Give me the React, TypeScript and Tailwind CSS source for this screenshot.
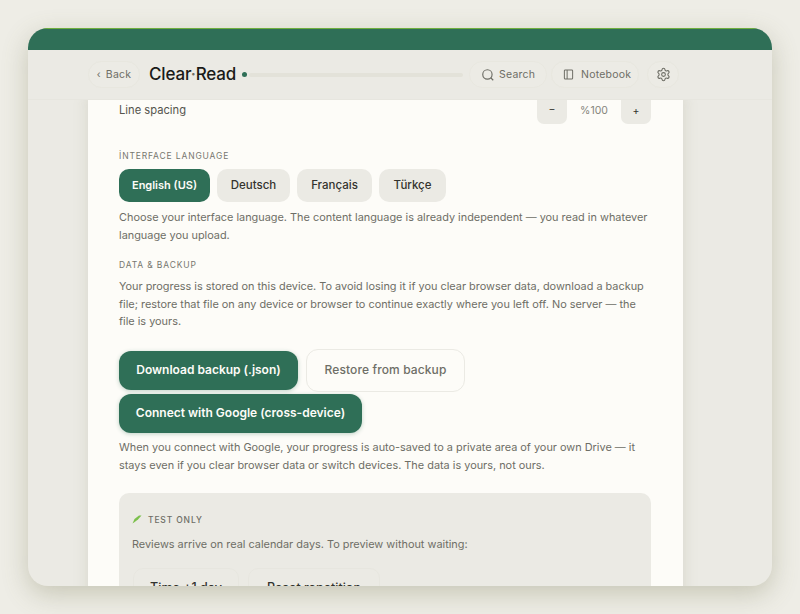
import React from "react";

function Pill({ children, className = "" }: { children: React.ReactNode; className?: string }) {
  return (
    <div className={"flex h-[27px] items-center rounded-[14px] border border-[#e8e7df] bg-[#ecebe5] text-[10.5px] tracking-[0.02em] text-[#6e6e66] " + className}>
      {children}
    </div>
  );
}

export default function App() {
  return (
    <div className="h-[614px] w-[800px] overflow-hidden bg-[#eeede6] px-[28px] pt-[28px] font-['Inter','Liberation_Sans',sans-serif]">
      <div className="flex h-[558px] w-[744px] flex-col overflow-hidden rounded-[20px] bg-[#ebeae4] shadow-[0_8px_26px_rgba(110,110,70,0.3)]">
        <div className="h-[22px] shrink-0 border-t border-[#6fae3e] bg-[#2f6f57]" />
        <div className="relative z-10 flex h-[50px] shrink-0 items-center border-b border-[#e7e6df] bg-[#ebeae4] pl-[60px]">
          <Pill className="w-[52px] justify-center gap-[5px]">
            <span className="text-[10px]">‹</span>
            <span>Back</span>
          </Pill>
          <div className="ml-[9px] text-[17px] font-medium leading-none tracking-[-0.01em] text-[#1a1a18]">
            Clear<span className="text-[#6e6e66]">·</span>Read
          </div>
          <div className="ml-[6px] h-[5px] w-[5px] rounded-full bg-[#2f6f57]" />
          <div className="ml-[2px] h-[4px] w-[214px] rounded-full bg-[#e3e2d9]" />
          <Pill className="ml-[6px] w-[78px] gap-[4px] pl-[11px]">
            <svg width="14" height="14" viewBox="0 0 24 24" fill="none" stroke="currentColor" strokeWidth="2"><circle cx="11" cy="11" r="8" /><path d="m21 21-4.3-4.3" /></svg>
            <span>Search</span>
          </Pill>
          <Pill className="ml-[4px] w-[88px] gap-[7px] pl-[11px]">
            <svg width="11" height="11" viewBox="0 0 12 12" fill="none" stroke="currentColor" strokeWidth="1.1"><rect x="1.5" y="1" width="9" height="10" rx="1" /><path d="M4.5 1v10" /></svg>
            <span>Notebook</span>
          </Pill>
          <Pill className="ml-[8px] w-[32px] justify-center">
            <svg width="15" height="15" viewBox="0 0 24 24" fill="none" stroke="currentColor" strokeWidth="1.7" strokeLinecap="round" strokeLinejoin="round"><path d="M9.671 4.136a2.34 2.34 0 0 1 4.659 0 2.34 2.34 0 0 0 3.319 1.915 2.34 2.34 0 0 1 2.33 4.033 2.34 2.34 0 0 0 0 3.831 2.34 2.34 0 0 1-2.33 4.033 2.34 2.34 0 0 0-3.319 1.915 2.34 2.34 0 0 1-4.659 0 2.34 2.34 0 0 0-3.32-1.915 2.34 2.34 0 0 1-2.33-4.033 2.34 2.34 0 0 0 0-3.831A2.34 2.34 0 0 1 6.35 6.051a2.34 2.34 0 0 0 3.32-1.915" /><circle cx="12" cy="12" r="3" /></svg>
          </Pill>
        </div>
        <div className="min-h-0 flex-1 overflow-hidden pl-[60px]">
          <div className="-mt-[6px] h-[600px] w-[595px] bg-[#fdfcf8] pl-[31px] pr-[32px] text-[#6e6e66] shadow-[0_0_14px_rgba(120,120,90,0.18)]">
            <div className="flex h-[30px] items-center justify-between">
              <span className="pt-[3px] text-[11.2px] text-[#55554e]">Line spacing</span>
              <div className="flex items-center text-[10.5px]">
                <div className="flex h-[30px] w-[30px] items-center justify-center rounded-[7px] bg-[#ebeae4] text-[#44443e]">−</div>
                <div className="w-[54px] pt-[3px] text-center text-[#85857c]">%100</div>
                <div className="flex h-[30px] w-[30px] items-center justify-center rounded-[7px] bg-[#ebeae4] pt-[3px] text-[#33332e]">+</div>
              </div>
            </div>
            <div className="mt-[26px] text-[8.5px] leading-[12px] tracking-[0.1em] text-[#77776f]">İNTERFACE LANGUAGE</div>
            <div className="mt-[7px] flex gap-[7px] text-[11.5px] font-medium text-[#33332e]">
              <div className="flex h-[33px] w-[91px] items-center justify-center rounded-[10px] bg-[#2f6f57] text-[11px] font-semibold text-[#fdfcf8]">English (US)</div>
              <div className="flex h-[33px] w-[73px] items-center justify-center rounded-[10px] bg-[#ebeae4]">Deutsch</div>
              <div className="flex h-[33px] w-[75px] items-center justify-center rounded-[10px] bg-[#ebeae4]">Français</div>
              <div className="flex h-[33px] w-[67px] items-center justify-center rounded-[10px] bg-[#ebeae4]">Türkçe</div>
            </div>
            <p className="mt-[6px] text-[10.9px] leading-[18px]">Choose your interface language. The content language is already independent — you read in whatever language you upload.</p>
            <div className="mt-[15px] text-[8.5px] leading-[12px] tracking-[0.1em] text-[#77776f]">DATA &amp; BACKUP</div>
            <p className="mt-[7px] text-[10.9px] leading-[17.6px]">Your progress is stored on this device. To avoid losing it if you clear browser data, download a backup file; restore that file on any device or browser to continue exactly where you left off. No server — the file is yours.</p>
            <div className="mt-[18px] flex items-center gap-[8px] text-[12px]">
              <div className="flex h-[39px] w-[179px] items-center justify-center rounded-[12px] bg-[#2f6f57] font-semibold text-[#fdfcf8] shadow-[0_1px_4px_rgba(47,111,87,0.3)]">Download backup (.json)</div>
              <div className="flex h-[43px] w-[159px] items-center justify-center rounded-[12px] border border-[#ebeae4] font-medium tracking-[0.01em] text-[#6e6e66]">Restore from backup</div>
            </div>
            <div className="mt-[2px] flex h-[39px] w-[243px] items-center justify-center rounded-[12px] bg-[#2f6f57] text-[12px] font-semibold text-[#fdfcf8] shadow-[0_1px_4px_rgba(47,111,87,0.3)]">Connect with Google (cross-device)</div>
            <p className="mt-[5px] text-[10.9px] leading-[18px]">When you connect with Google, your progress is auto-saved to a private area of your own Drive — it stays even if you clear browser data or switch devices. The data is yours, not ours.</p>
            <div className="mt-[19px] h-[200px] rounded-[10px] bg-[#ebeae4] px-[13px] pt-[20px]">
              <div className="flex items-center gap-[6px] text-[8.5px] font-medium leading-[14px] tracking-[0.1em] text-[#6e6e66]">
                <svg width="10" height="9" viewBox="0 0 10 9"><path d="M0.5 8.5 L2.5 4 L7 0.5 L9.5 0.5 L6 4.5 L2 7.5 Z" fill="#7cc04c" /></svg>
                TEST ONLY
              </div>
              <p className="mt-[8px] text-[10.9px] leading-[18px]">Reviews arrive on real calendar days. To preview without waiting:</p>
              <div className="mt-[15px] flex gap-[9px] pl-[1px] text-[12.5px] font-medium">
                <div className="flex h-[41px] w-[106px] items-center justify-center rounded-[10px] border border-[#e7e6df] text-[#33332e]">Time +1 day</div>
                <div className="flex h-[41px] w-[132px] items-center justify-center rounded-[10px] border border-[#e7e6df] text-[#33332e]">Reset repetition</div>
              </div>
            </div>
          </div>
        </div>
      </div>
    </div>
  );
}
